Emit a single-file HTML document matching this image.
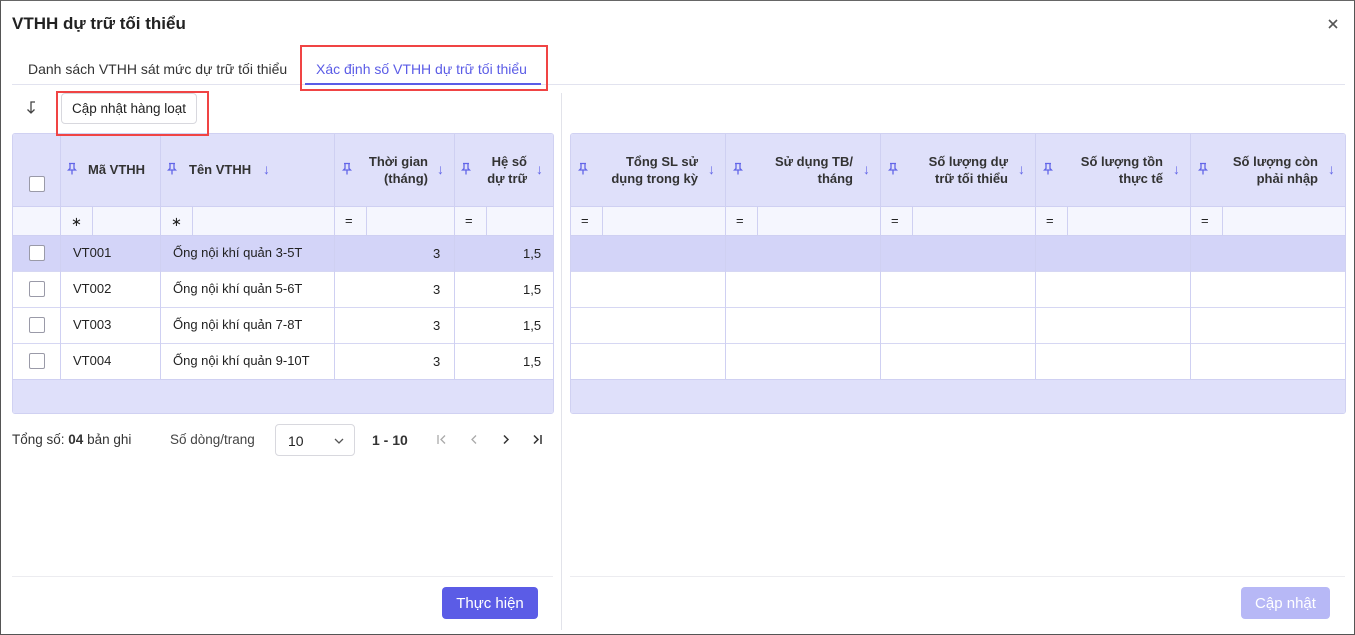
<!DOCTYPE html>
<html><head><meta charset="utf-8"><style>
*{box-sizing:border-box;margin:0;padding:0}
body{width:1355px;height:635px;overflow:hidden;background:#fff;font-family:"Liberation Sans",sans-serif;color:#222;position:relative}
.frame{position:absolute;left:0;top:0;width:1355px;height:635px;border:1px solid #555;border-top-color:#666}
.a{position:absolute}
.tbl{position:absolute;border:1px solid #d0d1f2;border-radius:3px;overflow:hidden;background:#fff}
.c{position:absolute;font-size:13px;display:flex;align-items:center}
.hd{background:#dfe0fa}
.pin{position:absolute;width:10px;height:13px}
.arr{color:#6265e8;font-size:14px}
.cb{position:absolute;width:16px;height:16px;border:1.5px solid #9a9aa8;border-radius:2px;background:#fff}
.vl{position:absolute;width:1px;background:#cfd0f2}
.hl{position:absolute;height:1px;background:#d6d7f3}
.ht{font-weight:bold;font-size:13px;color:#333;line-height:17px}
</style></head><body>
<svg width="0" height="0" style="position:absolute"><defs><symbol id="p" viewBox="0 0 10 13"><path d="M2 1.5h6M3 1.5v5L1.5 8h7L7 6.5v-5M5 8v4.5" fill="none" stroke="#6265e8" stroke-width="1.3"/></symbol></defs></svg>
<div class="a" style="left:12px;top:14px;font-size:17px;font-weight:bold;color:#222">VTHH dự trữ tối thiểu</div>
<svg class="a" style="left:1328px;top:19px" width="10" height="10" viewBox="0 0 10 10"><path d="M1 1l8 8M9 1l-8 8" stroke="#555" stroke-width="1.6"/></svg>

<div class="a" style="left:28px;top:61px;font-size:14px;color:#333">Danh sách VTHH sát mức dự trữ tối thiểu</div>
<div class="a" style="left:316px;top:61px;font-size:14px;color:#5b5ce6">Xác định số VTHH dự trữ tối thiểu</div>
<div class="a" style="left:12px;top:84px;width:1333px;height:1px;background:#e2e3ef"></div>
<div class="a" style="left:305px;top:83px;width:236px;height:2px;background:#5b5ce6"></div>
<div class="a" style="left:300px;top:45px;width:248px;height:46px;border:2px solid #f04444"></div>

<div class="a" style="left:561px;top:93px;width:1px;height:537px;background:#e2e3ea"></div>

<svg class="a" style="left:25px;top:101px" width="12" height="14" viewBox="0 0 12 14"><path d="M10 1H6v11M2.5 8.5L6 12l3.5-3.5" fill="none" stroke="#444" stroke-width="1.3"/></svg>
<div class="a" style="left:61px;top:93px;width:136px;height:31px;border:1px solid #d8d8de;border-radius:4px;font-size:13.5px;color:#222;display:flex;align-items:center;justify-content:center">Cập nhật hàng loạt</div>

<!-- left table -->
<div class="tbl" style="left:12px;top:133px;width:542px;height:281px">
 <div class="a hd" style="left:0;top:0;width:542px;height:72px"></div>
 <div class="a" style="left:0;top:72px;width:542px;height:29px;background:#f5f6fe"></div>
 <div class="a" style="left:0;top:101px;width:542px;height:36px;background:#d3d4f8"></div>
 <div class="a hd" style="left:0;top:245px;width:542px;height:36px"></div>
 <div class="hl" style="left:0;top:72px;width:542px;background:#cfd0f2"></div>
 <div class="hl" style="left:0;top:101px;width:542px;background:#cfd0f2"></div>
 <div class="hl" style="left:0;top:137px;width:542px"></div>
 <div class="hl" style="left:0;top:173px;width:542px"></div>
 <div class="hl" style="left:0;top:209px;width:542px"></div>
 <div class="hl" style="left:0;top:245px;width:542px;background:#cfd0f2"></div>
 <div class="vl" style="left:47px;top:0;height:245px"></div>
 <div class="vl" style="left:147px;top:0;height:245px"></div>
 <div class="vl" style="left:321px;top:0;height:245px"></div>
 <div class="vl" style="left:441px;top:0;height:245px"></div>
 <div class="vl" style="left:79px;top:72px;height:29px"></div>
 <div class="vl" style="left:179px;top:72px;height:29px"></div>
 <div class="vl" style="left:353px;top:72px;height:29px"></div>
 <div class="vl" style="left:473px;top:72px;height:29px"></div>

 <div class="cb" style="left:16px;top:42px"></div>
 <svg class="pin" style="left:54px;top:28px"><use href="#p"/></svg>
 <div class="c ht" style="left:75px;top:27px">Mã VTHH</div>
 <svg class="pin" style="left:154px;top:28px"><use href="#p"/></svg>
 <div class="c ht" style="left:176px;top:27px">Tên VTHH</div>
 <div class="c arr" style="left:250px;top:27px">↓</div>
 <svg class="pin" style="left:329px;top:28px"><use href="#p"/></svg>
 <div class="c ht" style="left:345px;top:19px;width:70px;text-align:right;justify-content:flex-end">Thời gian<br>(tháng)</div>
 <div class="c arr" style="left:424px;top:27px">↓</div>
 <svg class="pin" style="left:448px;top:28px"><use href="#p"/></svg>
 <div class="c ht" style="left:460px;top:19px;width:54px;text-align:right;justify-content:flex-end">Hệ số<br>dự trữ</div>
 <div class="c arr" style="left:523px;top:27px">↓</div>

 <div class="c" style="left:58px;top:80px">∗</div>
 <div class="c" style="left:158px;top:80px">∗</div>
 <div class="c" style="left:332px;top:79px">=</div>
 <div class="c" style="left:452px;top:79px">=</div>

 <div class="cb" style="left:16px;top:111px"></div>
 <div class="c" style="left:60px;top:111px">VT001</div>
 <div class="c" style="left:160px;top:111px">Ống nội khí quản 3-5T</div>
 <div class="c" style="left:420px;top:112px">3</div>
 <div class="c" style="left:510px;top:112px">1,5</div>
 <div class="cb" style="left:16px;top:147px"></div>
 <div class="c" style="left:60px;top:147px">VT002</div>
 <div class="c" style="left:160px;top:147px">Ống nội khí quản 5-6T</div>
 <div class="c" style="left:420px;top:148px">3</div>
 <div class="c" style="left:510px;top:148px">1,5</div>
 <div class="cb" style="left:16px;top:183px"></div>
 <div class="c" style="left:60px;top:183px">VT003</div>
 <div class="c" style="left:160px;top:183px">Ống nội khí quản 7-8T</div>
 <div class="c" style="left:420px;top:184px">3</div>
 <div class="c" style="left:510px;top:184px">1,5</div>
 <div class="cb" style="left:16px;top:219px"></div>
 <div class="c" style="left:60px;top:219px">VT004</div>
 <div class="c" style="left:160px;top:219px">Ống nội khí quản 9-10T</div>
 <div class="c" style="left:420px;top:220px">3</div>
 <div class="c" style="left:510px;top:220px">1,5</div>
</div>
<div class="a" style="left:56px;top:91px;width:153px;height:45px;border:2px solid #f04444"></div>

<!-- right table -->
<div class="tbl" style="left:570px;top:133px;width:776px;height:281px">
 <div class="a hd" style="left:0;top:0;width:776px;height:72px"></div>
 <div class="a" style="left:0;top:72px;width:776px;height:29px;background:#f5f6fe"></div>
 <div class="a" style="left:0;top:101px;width:776px;height:36px;background:#d3d4f8"></div>
 <div class="a hd" style="left:0;top:245px;width:776px;height:36px"></div>
 <div class="hl" style="left:0;top:72px;width:776px;background:#cfd0f2"></div>
 <div class="hl" style="left:0;top:101px;width:776px;background:#cfd0f2"></div>
 <div class="hl" style="left:0;top:137px;width:776px"></div>
 <div class="hl" style="left:0;top:173px;width:776px"></div>
 <div class="hl" style="left:0;top:209px;width:776px"></div>
 <div class="hl" style="left:0;top:245px;width:776px;background:#cfd0f2"></div>
 <div class="vl" style="left:154px;top:0;height:245px"></div>
 <div class="vl" style="left:309px;top:0;height:245px"></div>
 <div class="vl" style="left:464px;top:0;height:245px"></div>
 <div class="vl" style="left:619px;top:0;height:245px"></div>
 <div class="vl" style="left:31px;top:72px;height:29px"></div>
 <div class="vl" style="left:186px;top:72px;height:29px"></div>
 <div class="vl" style="left:341px;top:72px;height:29px"></div>
 <div class="vl" style="left:496px;top:72px;height:29px"></div>
 <div class="vl" style="left:651px;top:72px;height:29px"></div>

 <svg class="pin" style="left:7px;top:28px"><use href="#p"/></svg>
 <div class="c ht" style="left:20px;top:19px;width:107px;text-align:right;justify-content:flex-end">Tổng SL sử<br>dụng trong kỳ</div>
 <div class="c arr" style="left:137px;top:27px">↓</div>
 <svg class="pin" style="left:162px;top:28px"><use href="#p"/></svg>
 <div class="c ht" style="left:175px;top:19px;width:107px;text-align:right;justify-content:flex-end">Sử dụng TB/<br>tháng</div>
 <div class="c arr" style="left:292px;top:27px">↓</div>
 <svg class="pin" style="left:317px;top:28px"><use href="#p"/></svg>
 <div class="c ht" style="left:330px;top:19px;width:107px;text-align:right;justify-content:flex-end">Số lượng dự<br>trữ tối thiểu</div>
 <div class="c arr" style="left:447px;top:27px">↓</div>
 <svg class="pin" style="left:472px;top:28px"><use href="#p"/></svg>
 <div class="c ht" style="left:485px;top:19px;width:107px;text-align:right;justify-content:flex-end">Số lượng tồn<br>thực tế</div>
 <div class="c arr" style="left:602px;top:27px">↓</div>
 <svg class="pin" style="left:627px;top:28px"><use href="#p"/></svg>
 <div class="c ht" style="left:640px;top:19px;width:107px;text-align:right;justify-content:flex-end">Số lượng còn<br>phải nhập</div>
 <div class="c arr" style="left:757px;top:27px">↓</div>

 <div class="c" style="left:10px;top:79px">=</div>
 <div class="c" style="left:165px;top:79px">=</div>
 <div class="c" style="left:320px;top:79px">=</div>
 <div class="c" style="left:475px;top:79px">=</div>
 <div class="c" style="left:630px;top:79px">=</div>
</div>

<!-- pagination -->
<div class="a" style="left:12px;top:432px;font-size:13.5px;color:#333">Tổng số: <b>04</b> bản ghi</div>
<div class="a" style="left:170px;top:432px;font-size:13.5px;color:#444">Số dòng/trang</div>
<div class="a" style="left:275px;top:424px;width:80px;height:32px;border:1px solid #d8d8de;border-radius:4px;font-size:14px;padding:8px 12px">10<svg style="position:absolute;right:10px;top:13px" width="10" height="6" viewBox="0 0 10 6"><path d="M1 1l4 4 4-4" fill="none" stroke="#555" stroke-width="1.3"/></svg></div>
<div class="a" style="left:372px;top:432px;font-size:14px;font-weight:bold;color:#333">1 - 10</div>
<svg class="a" style="left:437px;top:434px" width="10" height="11" viewBox="0 0 10 11"><path d="M1 1v9M8 1.5L4 5.5l4 4" fill="none" stroke="#aaa" stroke-width="1.3"/></svg>
<svg class="a" style="left:470px;top:434px" width="8" height="11" viewBox="0 0 8 11"><path d="M6 1.5L2 5.5l4 4" fill="none" stroke="#aaa" stroke-width="1.3"/></svg>
<svg class="a" style="left:502px;top:434px" width="8" height="11" viewBox="0 0 8 11"><path d="M2 1.5l4 4-4 4" fill="none" stroke="#333" stroke-width="1.5"/></svg>
<svg class="a" style="left:532px;top:434px" width="11" height="11" viewBox="0 0 11 11"><path d="M2 1.5l4 4-4 4M9 1v9" fill="none" stroke="#333" stroke-width="1.5"/></svg>

<div class="a" style="left:12px;top:576px;width:541px;height:1px;background:#ececf0"></div>
<div class="a" style="left:570px;top:576px;width:775px;height:1px;background:#ececf0"></div>
<div class="a" style="left:442px;top:587px;width:96px;height:32px;background:#5b5ce6;border-radius:4px;color:#fff;font-size:15px;display:flex;align-items:center;justify-content:center">Thực hiện</div>
<div class="a" style="left:1241px;top:587px;width:89px;height:32px;background:#b7b8f6;border-radius:4px;color:#fff;font-size:15px;display:flex;align-items:center;justify-content:center">Cập nhật</div>

<div class="frame"></div>
</body></html>
